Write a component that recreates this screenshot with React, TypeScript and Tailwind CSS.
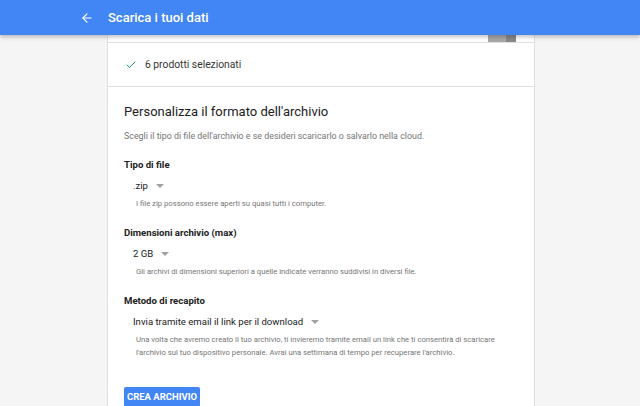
import { ArrowLeft, Check } from "lucide-react";

function Caret() {
  return (
    <span className="ml-[8px] inline-block w-0 h-0 border-l-[4px] border-r-[4px] border-t-[4px] border-l-transparent border-r-transparent border-t-[#a0a0a0]" />
  );
}

function Field({ label, value, help }: { label: string; value: string; help: React.ReactNode }) {
  return (
    <div className="flex flex-col">
      <div className="text-[9.6px] font-bold text-[#212121] leading-[14px]">{label}</div>
      <div className="mt-[7px] pl-[9px] flex items-center text-[9.6px] text-[#212121] leading-[14px]">
        {value}
        <Caret />
      </div>
      <div className="mt-[4px] pl-[12px] text-[7.7px] text-[#757575] leading-[13px]">{help}</div>
    </div>
  );
}

export default function App() {
  return (
    <div className="relative w-[640px] h-[406px] overflow-hidden bg-[#f5f5f5] font-['Roboto',sans-serif]">
      <header className="absolute z-10 inset-x-0 top-0 h-[35px] bg-[#4285f4] flex items-center shadow-[0_2px_4px_rgba(0,0,0,0.25)]">
        <ArrowLeft className="ml-[80px] w-[14px] h-[14px] text-white" strokeWidth={2} />
        <span className="ml-[14px] text-white text-[13px] font-medium">Scarica i tuoi dati</span>
      </header>

      <main className="ml-[107px] w-[428px] h-full bg-white border-x border-[#e0e0e0] pt-[35px]">
        <div className="relative h-[8px] border-b border-[#e0e0e0]">
          <div className="absolute right-[18px] top-0 h-[7px] w-[28px] flex">
            <div className="flex-1 bg-[#a8a8a8]" />
            <div className="w-[10px] bg-[#8a8a8a]" />
          </div>
        </div>

        <div className="h-[44px] flex items-center pl-[17px] border-b border-[#e0e0e0]">
          <Check className="w-[12px] h-[12px] text-[#0f9d58]" strokeWidth={2} />
          <span className="ml-[8px] text-[10.3px] text-[#333]">6 prodotti selezionati</span>
        </div>

        <section className="pl-[16px] pr-[16px] pt-[15px]">
          <h2 className="text-[13px] text-[#212121] leading-[20px]">Personalizza il formato dell'archivio</h2>
          <p className="mt-[7px] text-[8.9px] text-[#757575] leading-[14px]">
            Scegli il tipo di file dell'archivio e se desideri scaricarlo o salvarlo nella cloud.
          </p>

          <div className="mt-[15px] flex flex-col gap-[16px]">
            <Field label="Tipo di file" value=".zip" help="I file zip possono essere aperti su quasi tutti i computer." />
            <Field
              label="Dimensioni archivio (max)"
              value="2 GB"
              help="Gli archivi di dimensioni superiori a quelle indicate verranno suddivisi in diversi file."
            />
            <Field
              label="Metodo di recapito"
              value="Invia tramite email il link per il download"
              help={
                <>
                  Una volta che avremo creato il tuo archivio, ti invieremo tramite email un link che ti consentirà di scaricare
                  <br />
                  l'archivio sul tuo dispositivo personale. Avrai una settimana di tempo per recuperare l'archivio.
                </>
              }
            />
          </div>

          <button className="mt-[28px] h-[20px] w-[76px] rounded-[2px] bg-[#4285f4] text-white text-[9.5px] font-bold">
            CREA ARCHIVIO
          </button>
        </section>
      </main>
    </div>
  );
}
